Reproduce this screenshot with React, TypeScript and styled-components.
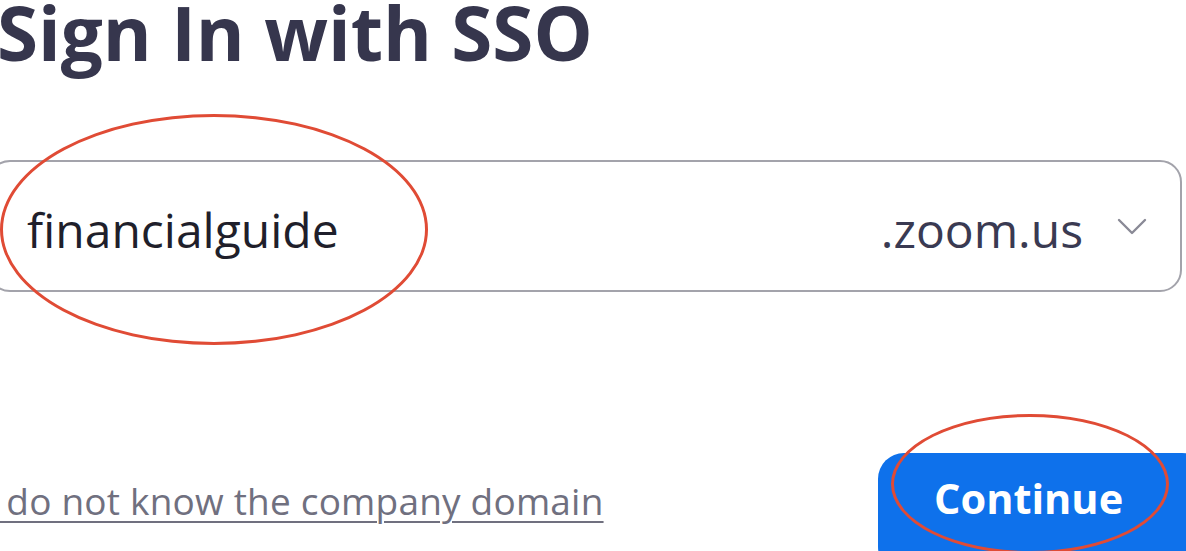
import React from "react";
import styled, { createGlobalStyle } from "styled-components";

const Global = createGlobalStyle`
  html, body { margin: 0; padding: 0; background: #ffffff; }
  body { width: 1186px; height: 551px; overflow: hidden; font-family: "Open Sans", "Noto Sans", sans-serif; }
`;

const Page = styled.div`
  position: relative;
  width: 1186px;
  height: 551px;
  overflow: hidden;
  display: flex;
  flex-direction: column;
  & > * { flex-shrink: 0; }
`;

const Title = styled.h1`
  margin: -6px 0 0 -3px;
  font-size: 74.5px;
  line-height: 76px;
  font-weight: 700;
  color: #36364d;
  white-space: nowrap;
`;

const DomainField = styled.div`
  margin: 90px 0 0 -12px;
  width: 1194px;
  height: 132px;
  box-sizing: border-box;
  border: 2px solid #a3a3ab;
  border-radius: 22px;
  display: flex;
  align-items: center;
  padding: 6px 33px 0 37px;
`;

const DomainInput = styled.div`
  flex: 1;
  font-size: 48px;
  color: #1f1f2b;
  white-space: nowrap;
`;

const Suffix = styled.div`
  font-size: 48px;
  color: #3a3a52;
  white-space: nowrap;
  margin-right: 34px;
`;

const Chevron = styled.svg`
  width: 30px;
  height: 17px;
  display: block;
  margin-top: -6px;
`;

const Footer = styled.div`
  margin-top: 161px;
  display: flex;
  justify-content: space-between;
  align-items: flex-start;
`;

const Link = styled.a`
  margin-top: 22px;
  margin-left: -14px;
  font-size: 37px;
  letter-spacing: 0.2px;
  color: #70707f;
  text-decoration: underline;
  text-decoration-thickness: 2px;
  text-underline-offset: 6px;
  white-space: nowrap;
  cursor: pointer;
`;

const Button = styled.button`
  width: 330px;
  height: 120px;
  margin-right: -22px;
  border: none;
  border-radius: 26px;
  background: #0e71eb;
  color: #ffffff;
  font-family: "Open Sans", "Noto Sans", sans-serif;
  font-weight: 700;
  font-size: 41.5px;
  line-height: normal;
  display: flex;
  align-items: flex-start;
  justify-content: flex-start;
  padding: 17px 0 0 56px;
  box-sizing: border-box;
  cursor: pointer;
`;

const Ring = styled.div<{ $x: number; $y: number; $w: number; $h: number }>`
  position: absolute;
  left: ${(p) => p.$x}px;
  top: ${(p) => p.$y}px;
  width: ${(p) => p.$w}px;
  height: ${(p) => p.$h}px;
  border: 3px solid #e04b35;
  border-radius: 50%;
  box-sizing: border-box;
  pointer-events: none;
`;

export default function App() {
  return (
    <>
      <Global />
      <Page>
        <Title>Sign In with SSO</Title>
        <DomainField>
          <DomainInput>financialguide</DomainInput>
          <Suffix>.zoom.us</Suffix>
          <Chevron viewBox="0 0 30 17" fill="none">
            <path d="M2 2 L15 15 L28 2" stroke="#8a8a96" strokeWidth="2.4" strokeLinecap="round" strokeLinejoin="round" />
          </Chevron>
        </DomainField>
        <Footer>
          <Link>I do not know the company domain</Link>
          <Button>Continue</Button>
        </Footer>
        <Ring $x={0} $y={114} $w={428} $h={231} />
        <Ring $x={891} $y={414} $w={278} $h={140} />
      </Page>
    </>
  );
}
